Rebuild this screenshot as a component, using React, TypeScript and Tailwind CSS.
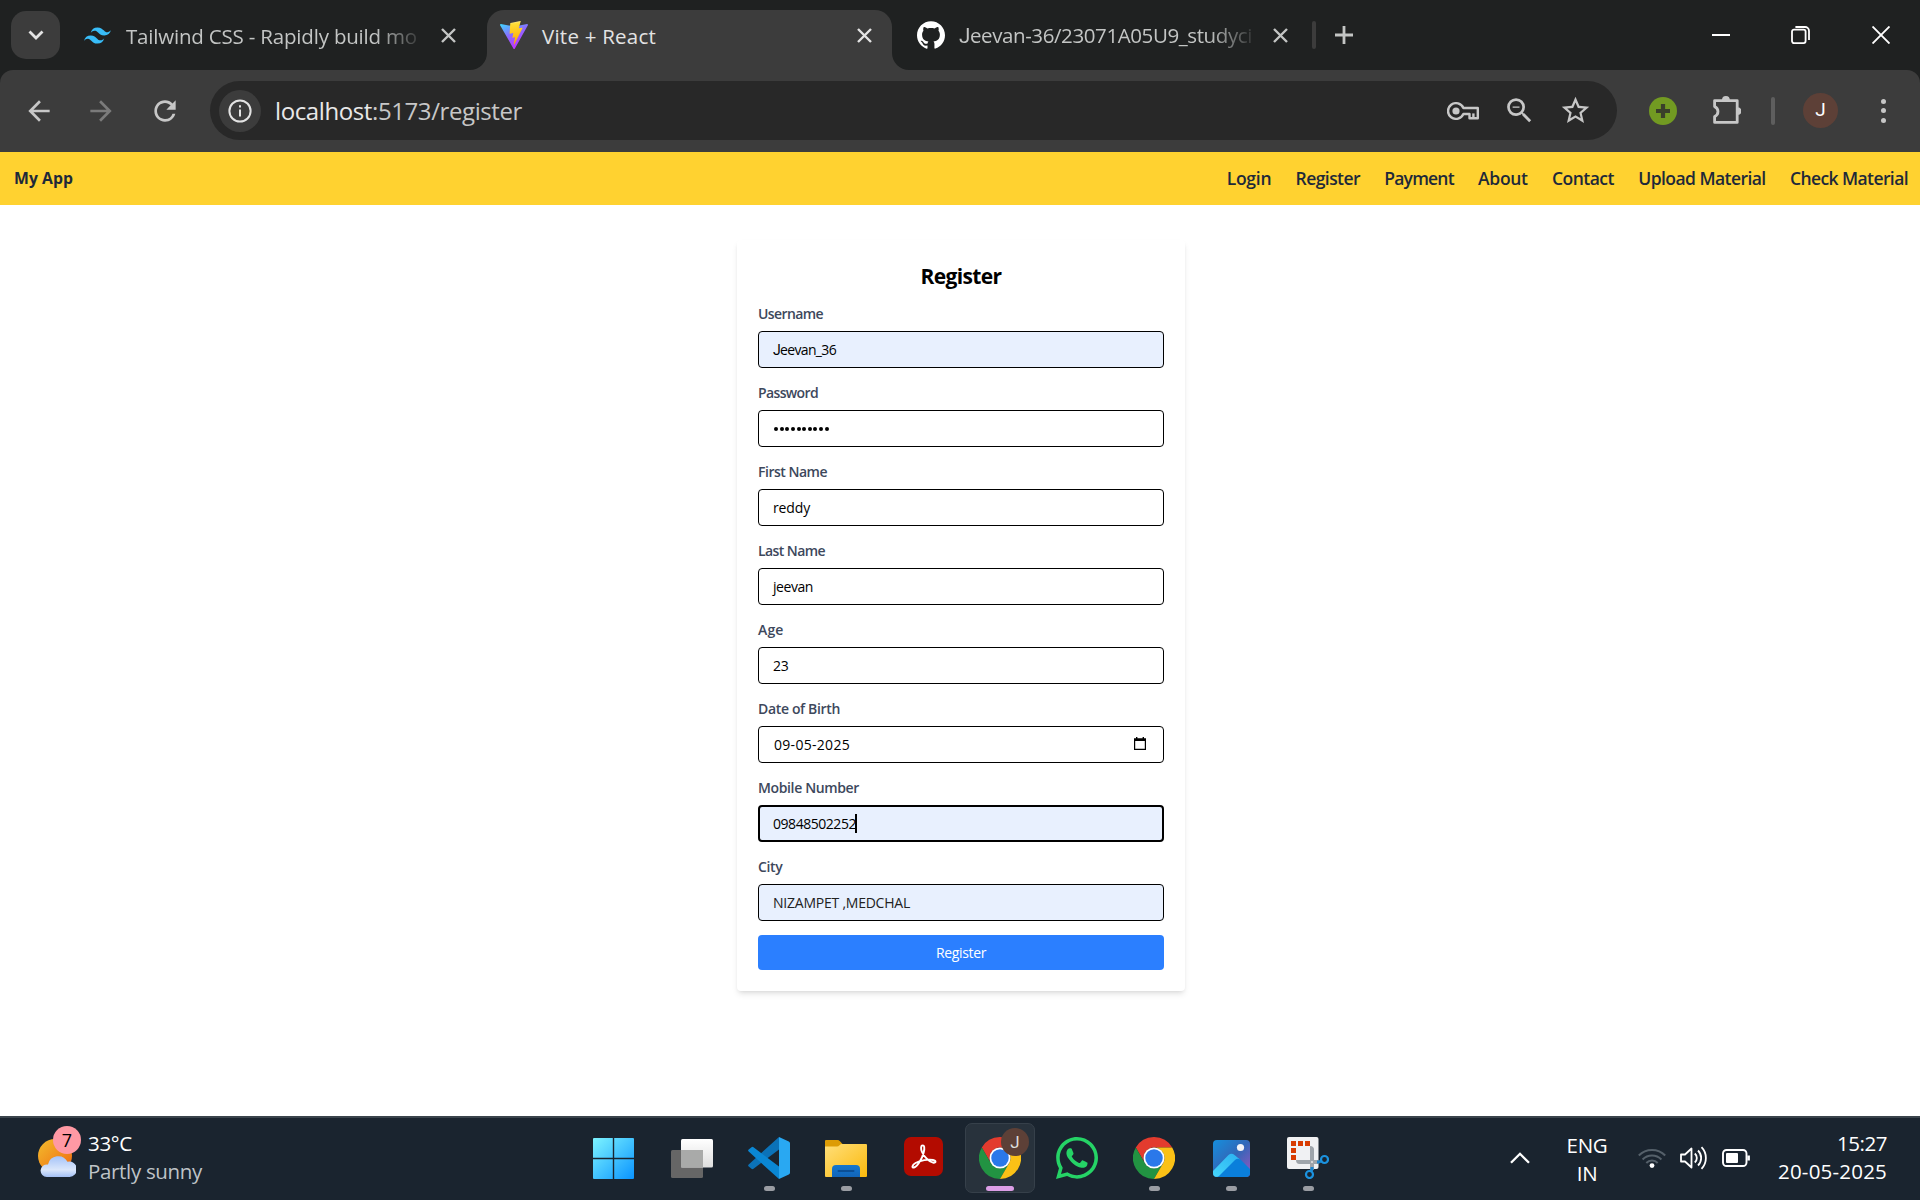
import { useLayoutEffect, useRef, useState, type ReactNode } from "react";
import { MdArrowBack, MdArrowForward, MdRefresh, MdStarBorder, MdZoomOut } from "react-icons/md";
import { SiTailwindcss, SiGithub } from "react-icons/si";
import { FaWhatsapp } from "react-icons/fa";

/* A single line of text whose letter spacing is adjusted to give it a set width. */
function Fit({ w, children, className = "" }: { w: number; children: string; className?: string }) {
  const ref = useRef<HTMLSpanElement>(null);
  const [spacing, setSpacing] = useState(0);
  useLayoutEffect(() => {
    if (ref.current) setSpacing((w - ref.current.getBoundingClientRect().width) / children.length);
  }, [w, children]);
  return (
    <span ref={ref} className={`inline-block shrink-0 whitespace-pre ${className}`} style={{ letterSpacing: `${spacing}px` }}>
      {children}
    </span>
  );
}

const CloseX = ({ className = "" }: { className?: string }) => (
  <svg viewBox="0 0 15 15" className={`h-[15px] w-[15px] shrink-0 ${className}`} fill="none" stroke="currentColor" strokeWidth="2.4">
    <path d="M1 1 14 14M14 1 1 14" />
  </svg>
);

const ViteLogo = () => (
  <svg viewBox="2 2 28 28" className="h-7 w-7 shrink-0">
    <defs>
      <linearGradient id="va" x1="6" x2="18" y1="4" y2="28" gradientUnits="userSpaceOnUse">
        <stop stopColor="#41d1ff" />
        <stop offset=".5" stopColor="#8a6cff" />
        <stop offset="1" stopColor="#bd34fe" />
      </linearGradient>
      <linearGradient id="vb" x1="15" x2="18" y1="3" y2="24" gradientUnits="userSpaceOnUse">
        <stop stopColor="#ffea83" />
        <stop offset=".1" stopColor="#ffdd35" />
        <stop offset="1" stopColor="#ffa800" />
      </linearGradient>
    </defs>
    <path fill="url(#va)" d="M29.884 6.146L16.748 29.65a.714.714 0 0 1-1.244.005L2.096 6.148a.714.714 0 0 1 .746-1.057l13.156 2.352a.714.714 0 0 0 .253 0l12.881-2.348a.714.714 0 0 1 .752 1.05z" />
    <path fill="url(#vb)" d="M22.264 2.007l-9.72 1.905a.357.357 0 0 0-.288.33l-.598 10.098a.357.357 0 0 0 .437.369l2.706-.625a.357.357 0 0 1 .43.42l-.804 3.939a.357.357 0 0 0 .454.413l1.672-.508a.357.357 0 0 1 .454.414l-1.279 6.187c-.08.387.435.598.65.267l.143-.222 7.925-15.815a.357.357 0 0 0-.387-.51l-2.787.537a.357.357 0 0 1-.41-.45l1.818-6.306a.357.357 0 0 0-.412-.45z" />
  </svg>
);

function TabStrip() {
  return (
    <div className="flex h-[70px] items-center text-[20.5px] text-[#c3c5c4]">
      <div className="ml-[11px] flex h-12 w-[49px] items-center justify-center rounded-[15px] bg-[#3c3c3c] text-[#e3e3e3]">
        <svg viewBox="0 0 16 10" className="h-[10px] w-4" fill="none" stroke="currentColor" strokeWidth="2.8">
          <path d="m1.5 1.5 6.5 6.5 6.5-6.5" />
        </svg>
      </div>
      <SiTailwindcss className="ml-6 h-[27px] w-[27px] shrink-0 text-[#38bdf8]" />
      <div className="mt-[2px] ml-[15px] w-[293px] overflow-hidden [mask-image:linear-gradient(to_right,black_250px,transparent_300px)]">
        <Fit w={291}>Tailwind CSS - Rapidly build mo</Fit>
      </div>
      <CloseX className="ml-[22px]" />
      <div className="relative ml-[31px] flex h-[60px] w-[405px] items-center self-end rounded-t-[17px] bg-[#3c3c3c] pb-[10px] text-[#e3e3e3]">
        <svg viewBox="0 0 17 17" className="absolute bottom-0 -left-[17px] h-[17px] w-[17px] fill-[#3c3c3c]">
          <path d="M17 0v17H0A17 17 0 0 0 17 0z" />
        </svg>
        <svg viewBox="0 0 17 17" className="absolute -right-[17px] bottom-0 h-[17px] w-[17px] fill-[#3c3c3c]">
          <path d="M0 0v17h17A17 17 0 0 1 0 0z" />
        </svg>
        <span className="ml-[13px] flex">
          <ViteLogo />
        </span>
        <Fit w={114} className="mt-[2px] ml-[14px]">Vite + React</Fit>
        <CloseX className="mr-[20px] ml-auto" />
      </div>
      <SiGithub className="ml-[25px] h-7 w-7 shrink-0 text-white" />
      <div className="mt-[2px] ml-[14px] w-[293px] overflow-hidden [mask-image:linear-gradient(to_right,black_250px,transparent_300px)]">
        <Fit w={293} className="first-letter:font-['Roboto']">Jeevan-36/23071A05U9_studyci</Fit>
      </div>
      <CloseX className="ml-[21px]" />
      <div className="ml-[24px] h-7 w-[4px] rounded-full bg-[#3c3c3c]" />
      <svg viewBox="0 0 18 18" className="ml-[19px] h-[18px] w-[18px] shrink-0" fill="none" stroke="currentColor" strokeWidth="2.8">
        <path d="M9 0v18M0 9h18" />
      </svg>
      <div className="mr-[30px] ml-auto flex items-center text-white">
        <div className="h-[2px] w-[18px] bg-white" />
        <svg viewBox="0 0 19 18" className="ml-[61px] h-[18px] w-[19px]" fill="none" stroke="currentColor" strokeWidth="1.8">
          <rect x="1" y="3.6" width="13.6" height="13.5" rx="2" />
          <path d="M4.4 1H14a4 4 0 0 1 4 4v9" />
        </svg>
        <svg viewBox="0 0 18 18" className="ml-[62px] h-[18px] w-[18px]" fill="none" stroke="currentColor" strokeWidth="1.9">
          <path d="M.5.5l17 17M17.5.5l-17 17" />
        </svg>
      </div>
    </div>
  );
}

function Toolbar() {
  return (
    <div className="flex h-[82px] items-center rounded-t-[13px] bg-[#3c3c3c] pb-px text-[#c7c7c7]">
      <MdArrowBack className="ml-[22.5px] h-8 w-8" />
      <MdArrowForward className="ml-[30.5px] h-8 w-8 text-[#7b7b7b]" />
      <MdRefresh className="ml-[31.5px] h-8 w-8" />
      <div className="ml-[29.5px] flex h-[59px] w-[1407px] items-center rounded-full bg-[#282828]">
        <div className="ml-[9px] flex h-[42px] w-[42px] items-center justify-center rounded-full bg-[#3c3c3c] text-[#e3e3e3]">
          <svg viewBox="0 0 24 24" className="h-6 w-6" fill="none" stroke="currentColor" strokeWidth="2">
            <circle cx="12" cy="12" r="10.6" />
            <path d="M12 10.5v7M12 6.3v2.2" />
          </svg>
        </div>
        <span className="mt-px ml-[14px] flex text-[24px]">
          <Fit w={97} className="text-[#e8e8e8]">localhost</Fit>
          <Fit w={150} className="text-[#c7c7c7]">:5173/register</Fit>
        </span>
        <svg viewBox="0 0 32 18" className="mt-px mr-[24px] ml-auto h-[18px] w-8" fill="none" stroke="currentColor" strokeWidth="2.4">
          <path d="M16.4 6A8 7.8 0 1 0 16.4 12H22.5V16.2H30.8V6Z" strokeLinejoin="round" />
          <circle cx="9" cy="9" r="3.6" fill="currentColor" stroke="none" />
          <path d="M26.4 16v-4.6" />
        </svg>
        <MdZoomOut className="h-[33px] w-[33px]" />
        <MdStarBorder className="mr-[25px] ml-[23px] h-[33px] w-[33px]" />
      </div>
      <svg viewBox="0 0 28 28" className="mt-px ml-8 h-7 w-7">
        <circle cx="14" cy="14" r="14" fill="#729a22" />
        <path d="M14 7v14M7 14h14" stroke="#3a3f2a" strokeWidth="4.2" />
      </svg>
      <svg viewBox="0 0 28 28" className="mb-[2px] ml-9 h-7 w-7">
        <path d="M1.6 4.6H24.2V26.4H1.6V20.6A5.4 5.4 0 0 0 1.6 10.6Z" fill="none" stroke="currentColor" strokeWidth="2.8" strokeLinejoin="round" />
        <path d="M9 4a3.9 3.9 0 0 1 7.8 0zM24.5 11.3a3.9 3.9 0 0 1 0 7.8z" fill="currentColor" />
      </svg>
      <div className="ml-[30px] h-7 w-[4px] rounded-full bg-[#5e5e5e]" />
      <div className="ml-7 flex h-[35px] w-[35px] items-center justify-center rounded-full bg-[#5d4037] font-['Roboto'] text-[19px] text-white">J</div>
      <div className="ml-[43px] flex flex-col gap-[4.5px]">
        <i className="h-[5px] w-[5px] rounded-full bg-[#c7c7c7]" />
        <i className="h-[5px] w-[5px] rounded-full bg-[#c7c7c7]" />
        <i className="h-[5px] w-[5px] rounded-full bg-[#c7c7c7]" />
      </div>
    </div>
  );
}

const LINKS: [string, number][] = [
  ["Login", 44.5],
  ["Register", 64.5],
  ["Payment", 69.5],
  ["About", 49.5],
  ["Contact", 62],
  ["Upload Material", 127.5],
  ["Check Material", 118],
];

function Field({ label, w, fill = "bg-white", border = "border border-black", children }: { label: string; w: number; fill?: string; border?: string; children: ReactNode }) {
  return (
    <div className="mb-[14px]">
      <div className="h-[28px] text-[14px] leading-[21px] font-semibold text-[#3d485c]">
        <Fit w={w}>{label}</Fit>
      </div>
      <div className={`flex h-[37px] items-center rounded-[4px] text-[14px] leading-[21px] text-black ${fill} ${border}`}>{children}</div>
    </div>
  );
}

function RegisterCard() {
  return (
    <div className="mt-[35px] ml-[737px] h-[751px] w-[448px] rounded-[4px] bg-white px-[21px] pt-[22px] shadow-md">
      <h2 className="mb-[13px] text-center text-[21px] leading-[28px] font-bold text-black">
        <Fit w={81}>Register</Fit>
      </h2>
      <Field label="Username" w={65} fill="bg-[#e8f0fe]">
        <Fit w={63} className="ml-[14px] first-letter:font-['Roboto']">Jeevan_36</Fit>
      </Field>
      <Field label="Password" w={60}>
        <span className="ml-[15px] flex gap-[1.65px]">
          {Array.from({ length: 10 }, (_, i) => (
            <i key={i} className="h-1 w-1 rounded-full bg-black" />
          ))}
        </span>
      </Field>
      <Field label="First Name" w={69}>
        <Fit w={37} className="ml-[14px]">reddy</Fit>
      </Field>
      <Field label="Last Name" w={67}>
        <Fit w={40} className="ml-[14px]">jeevan</Fit>
      </Field>
      <Field label="Age" w={25.5}>
        <Fit w={15.5} className="ml-[14px]">23</Fit>
      </Field>
      <Field label="Date of Birth" w={82}>
        <Fit w={76} className="ml-[15px]">09-05-2025</Fit>
        <svg viewBox="0 0 12 13" className="mr-[17px] mb-[2px] ml-auto h-[13px] w-3" fill="#000">
          <path d="M2 0h1.4v1.2H8.600V0H10v1.200H12V13H0V1.200H2zM1.200 4V11.800H10.800V4z" fillRule="evenodd" />
        </svg>
      </Field>
      <Field label="Mobile Number" w={101} fill="bg-[#e8f0fe]" border="border-2 border-black">
        <Fit w={83} className="ml-[13px]">09848502252</Fit>
        <i className="-ml-px h-[19px] w-[2px] bg-black" />
      </Field>
      <Field label="City" w={24.5} fill="bg-[#e8f0fe]">
        <Fit w={137} className="ml-[14px] text-[#222]">NIZAMPET ,MEDCHAL</Fit>
      </Field>
      <button className="flex h-[35px] w-full items-center justify-center rounded-[4px] bg-[#2b7fff] text-[14px] text-white">
        <Fit w={50}>Register</Fit>
      </button>
    </div>
  );
}

const ChromeLogo = () => (
  <svg viewBox="0 0 48 48" className="h-[42px] w-[42px]">
    <path fill="#e33b2e" d="M24 12H44.785A24 24 0 0 0 3.215 12L13.608 30A12 12 0 0 1 24 12Z" />
    <path fill="#229342" d="M13.608 30 3.215 12A24 24 0 0 0 24 48L34.392 30A12 12 0 0 1 13.608 30Z" />
    <path fill="#fbc116" d="M34.392 30 24 48A24 24 0 0 0 44.785 12H24A12 12 0 0 1 34.392 30Z" />
    <circle cx="24" cy="24" r="12" fill="#fff" />
    <circle cx="24" cy="24" r="10" fill="#2a78ea" />
  </svg>
);

const StartLogo = () => (
  <svg viewBox="0 0 41 41" className="h-[41px] w-[41px]">
    <linearGradient id="win" x1="0" y1="0" x2="41" y2="41" gradientUnits="userSpaceOnUse">
      <stop stopColor="#7df4ff" />
      <stop offset="1" stopColor="#0a94ff" />
    </linearGradient>
    <path fill="url(#win)" d="M1 0H19.800V19.800H0V1A1 1 0 0 1 1 0M21.200 0H40a1 1 0 0 1 1 1V19.800H21.200zM0 21.200H19.800V41H1a1 1 0 0 1-1-1zM21.200 21.200H41V40a1 1 0 0 1-1 1H21.200z" />
  </svg>
);

const TaskViewLogo = () => (
  <svg viewBox="0 0 42 39" className="h-[39px] w-[42px]">
    <linearGradient id="tv" x1="0" y1="0" x2="0" y2="1">
      <stop stopColor="#fff" />
      <stop offset="1" stopColor="#dedede" />
    </linearGradient>
    <rect x="0" y="11" width="32" height="28" rx="1.5" fill="#666" />
    <rect x="10" y="0" width="32" height="28.500" rx="1.5" fill="url(#tv)" />
    <rect x="10" y="11" width="22" height="17.500" fill="#a9aaa9" />
  </svg>
);

const CodeLogo = () => (
  <svg viewBox="0 0 42 42" className="h-[42px] w-[42px]">
    <path fill="#0b72b8" d="M31 0 .7 27.400a1.500 1.500 0 0 0 0 2.200L3.500 31.800a1.500 1.500 0 0 0 2 0L31 12.500z" />
    <path fill="#0a87d4" d="M31 42 .7 14.600a1.500 1.500 0 0 1 0-2.200L3.500 10.200a1.500 1.500 0 0 1 2 0L31 29.500z" />
    <path fill="#29a8f2" d="M31 0 40.800 4.600a2 2 0 0 1 1.200 1.900V35.500a2 2 0 0 1-1.200 1.900L31 42z" />
  </svg>
);

const FolderLogo = () => (
  <svg viewBox="0 0 42 37" className="h-[37px] w-[42px]">
    <linearGradient id="fo" x1="0" y1="0" x2="1" y2="1">
      <stop stopColor="#ffdf7a" />
      <stop offset="1" stopColor="#fbb90c" />
    </linearGradient>
    <linearGradient id="fb" x1="0" y1="0" x2="0" y2="1">
      <stop stopColor="#1477cf" />
      <stop offset="1" stopColor="#1265b8" />
    </linearGradient>
    <path fill="#dd9c05" d="M0 1a1 1 0 0 1 1-1H12.500q1.500 0 2.500 1.200L18 4.500V10H0z" />
    <path fill="url(#fo)" d="M0 6.500H12q1.500 0 2.500-1.200Q15.500 4 17 4H41a1 1 0 0 1 1 1V36a1 1 0 0 1-1 1H1a1 1 0 0 1-1-1z" />
    <path fill="url(#fb)" d="M7 37V29a4 4 0 0 1 4-4H31a4 4 0 0 1 4 4V37z" />
    <path stroke="#0b4f96" strokeWidth="2" strokeLinecap="round" d="M13.500 31H28.500" />
  </svg>
);

const AcrobatLogo = () => (
  <svg viewBox="0 0 39 39" className="h-[39px] w-[39px]">
    <rect width="39" height="39" rx="7" fill="#b30b00" />
    <path
      d="M18.200 8.500C20.500 7.500 20.800 11.500 19.700 15.500C18 22 13.500 29.500 10 30.500C7.500 31 8 28 11.500 26C16 23.500 24.500 22 29 23C32.500 23.800 32 26 29.500 25.700C25.500 25 20 20 18 15C16.500 11.500 17 9 18.200 8.500Z"
      fill="none"
      stroke="#fff"
      strokeWidth="1.9"
    />
  </svg>
);

const PhotosLogo = () => (
  <svg viewBox="0 0 37 37" className="h-[37px] w-[37px]">
    <defs>
      <linearGradient id="pa" x1="0" y1="0" x2="1" y2="1">
        <stop stopColor="#158fdd" />
        <stop offset=".5" stopColor="#3267b8" />
        <stop offset="1" stopColor="#9a55c0" />
      </linearGradient>
      <linearGradient id="pb" x1="0" y1="1" x2="1" y2="0">
        <stop stopColor="#45d6fb" />
        <stop offset="1" stopColor="#2bb0f0" />
      </linearGradient>
      <clipPath id="pc">
        <rect width="37" height="37" rx="4" />
      </clipPath>
    </defs>
    <g clipPath="url(#pc)">
      <rect width="37" height="37" fill="url(#pa)" />
      <path fill="#0a7fdb" d="M4 37 22 19q2.500-2 5 0L37 29V37z" />
      <path fill="url(#pb)" d="M0 31 15.500 15q3-2.500 6 0l5.500 4.500q-2.500-1.500-5 .5L6 36q-1 1-3 1H0z" />
      <circle cx="27.500" cy="7.500" r="3.600" fill="#f2f3f7" />
    </g>
  </svg>
);

const SnipLogo = () => (
  <svg viewBox="0 0 42 42" className="h-[42px] w-[42px]">
    <rect width="31.500" height="32" rx="2" fill="#f0f1f3" />
    <path fill="#d83b01" d="M4 4h5v5H4zM11 4h5v5h-5zM18 4h5v5h-5zM4 11h5v5H4zM4 18h5v5H4z" />
    <path fill="#9fa5ab" d="M23 9q4 0 4 3.500V32.500L25 34l-2-2zM9 23H31v4H12.500Q9 27 9 23z" />
    <path d="M30 25 32 25 35 23.500M25 30 25 32 23.500 35" fill="none" stroke="#1a86d0" strokeWidth="3" />
    <circle cx="37.500" cy="22.500" r="3.500" fill="none" stroke="#1b93e0" strokeWidth="2.200" />
    <circle cx="22.500" cy="37.500" r="3.500" fill="none" stroke="#1b93e0" strokeWidth="2.200" />
    <circle cx="25" cy="25" r="1" fill="#e8e8e8" />
  </svg>
);

const WeatherIcon = () => (
  <svg viewBox="0 0 38 38" className="h-[38px] w-[38px]">
    <linearGradient id="sun" x1="0" y1="0" x2="1" y2="1">
      <stop stopColor="#f2bd2e" />
      <stop offset="1" stopColor="#f0660e" />
    </linearGradient>
    <linearGradient id="cl" x1="0" y1="0" x2="0" y2="1">
      <stop stopColor="#a5c3f8" />
      <stop offset=".65" stopColor="#dbe7fb" />
      <stop offset="1" stopColor="#a3c0f5" />
    </linearGradient>
    <circle cx="17" cy="17" r="17" fill="url(#sun)" />
    <path fill="url(#cl)" d="M9 38a6.300 6.300 0 1 1 1-12.500A10.500 10.500 0 0 1 29.500 22.800 7.700 7.700 0 1 1 31 38z" />
  </svg>
);

function TaskItem({ children, bar = "" }: { children: ReactNode; bar?: string }) {
  return (
    <div className="flex h-[70px] w-[77px] flex-col items-center">
      <div className="flex h-[70px] items-center">{children}</div>
      {bar && <i className={`-mt-[7px] h-[5px] shrink-0 rounded-full ${bar}`} />}
    </div>
  );
}

const IDLE = "w-[11px] bg-[#9a9da3]";

function Taskbar() {
  return (
    <div className="flex h-[84px] shrink-0 border-t-2 border-[#3a444c] bg-[#1a242f] text-[20.500px] leading-[28px] text-white">
      <div className="mt-[21px] ml-[38px] flex h-[38px] w-[537px]">
        <div className="relative h-[38px] w-[38px]">
          <WeatherIcon />
          <div className="absolute -top-[13px] left-[15px] flex h-7 w-7 items-center justify-center rounded-full bg-[#ff99a4] text-[18px] text-black">7</div>
        </div>
        <div className="-mt-[10px] ml-[12px] flex flex-col items-start">
          <Fit w={44}>33°C</Fit>
          <Fit w={114} className="text-[#bfc3c7]">Partly sunny</Fit>
        </div>
      </div>
      <div className="mt-[5px] flex">
        <div className="mr-[1.5px]">
          <TaskItem><StartLogo /></TaskItem>
        </div>
        <TaskItem><TaskViewLogo /></TaskItem>
        <TaskItem bar={IDLE}><CodeLogo /></TaskItem>
        <TaskItem bar={IDLE}><FolderLogo /></TaskItem>
        <TaskItem><span className="mb-[3px]"><AcrobatLogo /></span></TaskItem>
        <TaskItem>
          <div className="relative flex h-[70px] w-[70px] items-center justify-center rounded-[7px] border border-[#36404a] bg-[#28323c]">
            <ChromeLogo />
            <div className="absolute top-[4px] right-[5px] flex h-7 w-7 items-center justify-center rounded-full bg-[#5d4037] font-['Roboto'] text-[17px] text-[#ddd]">J</div>
            <i className="absolute bottom-[1px] h-[5px] w-7 rounded-full bg-[#dc9ee6]" />
          </div>
        </TaskItem>
        <TaskItem><FaWhatsapp className="h-[48px] w-[48px] text-[#25d366]" /></TaskItem>
        <TaskItem bar={IDLE}><ChromeLogo /></TaskItem>
        <TaskItem bar={IDLE}><PhotosLogo /></TaskItem>
        <TaskItem bar={IDLE}><SnipLogo /></TaskItem>
      </div>
      <div className="mr-[33px] ml-auto flex h-[80px] items-center">
        <svg viewBox="0 0 20 12" className="h-3 w-5" fill="none" stroke="currentColor" strokeWidth="2.300">
          <path d="M1 10.800 10 1.800 19 10.800" />
        </svg>
        <div className="mt-[2px] ml-[37px] flex w-[40px] flex-col items-center">
          <Fit w={41}>ENG</Fit>
          <Fit w={20.500}>IN</Fit>
        </div>
        <svg viewBox="0 0 28 20" className="mb-px ml-[31px] h-5 w-7" fill="none" stroke="#55606a" strokeWidth="2">
          <path d="M.8 7.500a18.500 18.500 0 0 1 26.400 0M4.600 11.500a13 13 0 0 1 18.800 0M8.300 15a8 8 0 0 1 11.400 0" />
          <circle cx="14" cy="17.600" r="2.400" fill="#fff" stroke="none" />
        </svg>
        <svg viewBox="0 0 28 24" className="ml-[14px] h-6 w-7" fill="none" stroke="currentColor" strokeWidth="1.800" strokeLinejoin="round">
          <path d="M1 8.500H5L11.500 2.500V21.500L5 15.500H1Z" />
          <path d="M14.800 7.500a6 6 0 0 1 0 9M18 4.500a10.500 10.500 0 0 1 0 15M21.500 1.200a15.500 15.500 0 0 1 0 21.600" />
        </svg>
        <svg viewBox="0 0 28 18" className="ml-[14px] h-[18px] w-7" fill="none" stroke="currentColor" strokeWidth="1.900">
          <rect x="1" y="1" width="23.500" height="16" rx="3.500" />
          <rect x="4" y="4" width="12" height="10" rx="1" fill="currentColor" stroke="none" />
          <path d="M26.600 6.500v5" strokeWidth="2.600" />
        </svg>
        <div className="-mt-[3px] ml-[29px] flex w-[108px] flex-col items-end">
          <Fit w={50}>15:27</Fit>
          <Fit w={109}>20-05-2025</Fit>
        </div>
      </div>
    </div>
  );
}

export default function App() {
  return (
    <div className="flex h-[1200px] w-[1920px] flex-col overflow-hidden bg-white font-['Open_Sans','Noto_Sans',sans-serif]">
      <div className="bg-[#1f2121]">
        <TabStrip />
        <Toolbar />
      </div>
      <main className="flex-1">
        <nav className="flex h-[53px] items-center bg-[#ffd230] pr-[12px] pl-[14px] text-[#1e2939]">
          <Fit w={59} className="text-[15.750px] font-bold">My App</Fit>
          <div className="ml-auto flex gap-[24.3px] text-[17.500px] font-semibold">
            {LINKS.map(([t, w]) => (
              <Fit key={t} w={w}>{t}</Fit>
            ))}
          </div>
        </nav>
        <RegisterCard />
      </main>
      <Taskbar />
    </div>
  );
}
